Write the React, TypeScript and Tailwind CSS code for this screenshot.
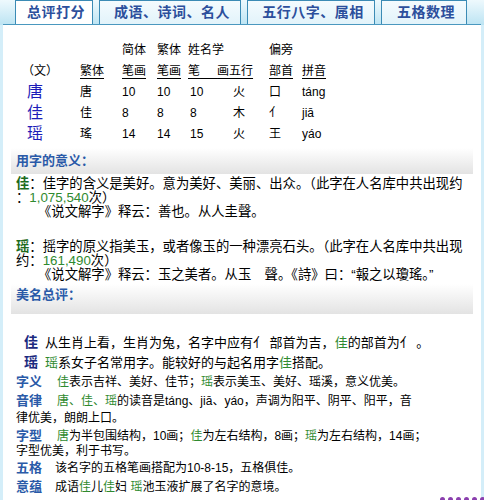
import React from "react";

const tabs = [
  { label: "总评打分", w: "w-[78px]", active: true },
  { label: "成语、诗词、名人", w: "w-[142px]", active: false },
  { label: "五行八字、属相", w: "w-[128px]", active: false },
  { label: "五格数理", w: "w-[86px]", active: false },
];

const rows = [
  { ch: "唐", fan: "唐", a: "10", b: "10", c: "10", wx: "火", bs: "口", py: "táng" },
  { ch: "佳", fan: "佳", a: "8", b: "8", c: "8", wx: "木", bs: "亻", py: "jiā" },
  { ch: "瑶", fan: "瑤", a: "14", b: "14", c: "15", wx: "火", bs: "王", py: "yáo" },
];

function G({ children }: { children: React.ReactNode }) {
  return <span className="text-[#2f8a2f]">{children}</span>;
}

function Label({ children, w = "w-[41px]" }: { children: React.ReactNode; w?: string }) {
  return (
    <span className={`inline-block ${w} text-[13px] font-bold text-[#2a5aa8]`}>{children}</span>
  );
}

function SectionBar({ title, className }: { title: string; className: string }) {
  return (
    <div
      className={`mx-[8px] flex bg-gradient-to-b from-white to-[#e3e3e3] pl-[5px] text-[13px] font-bold leading-[14px] text-[#2a5aa8] ${className}`}
    >
      {title}
    </div>
  );
}

export default function App() {
  return (
    <div className="h-[500px] w-[484px] overflow-hidden bg-[#d4eef9] font-['Liberation_Sans','Noto_Sans_CJK_SC',sans-serif] text-black">
      {/* 顶部标签栏 */}
      <div className="bg-gradient-to-b from-[#eef9fd] to-[#bce4f3] px-[3px]">
        <div className="flex h-[25px] gap-[6px] border-b border-[#4a98bf] pl-[12px]">
          {tabs.map((t) => (
            <div
              key={t.label}
              className={`${t.w} flex h-[24px] items-center justify-center border border-b-0 border-[#3b8bb5] pl-[4px] text-[14px] font-bold tracking-[0.5px] text-[#2c4f9c] ${
                t.active ? "bg-white pl-0" : "bg-gradient-to-b from-[#f4fbfe] to-[#e2f3fa]"
              }`}
            >
              {t.label}
            </div>
          ))}
        </div>
      </div>

      <div className="mx-[3px] h-[475px] bg-white">
        {/* 笔画表 */}
        <div className="pt-[14px] pl-[24px] text-[12px]">
          <div className="flex h-[21px] items-center">
            <span className="w-[95px]" />
            <span className="w-[35px]">简体</span>
            <span className="w-[31px]">繁体</span>
            <span className="w-[81px]">姓名学</span>
            <span>偏旁</span>
          </div>
          <div className="flex h-[21px] items-center">
            <span className="-ml-[5px] w-[58px]">（文）</span>
            <span className="w-[42px]"><span className="underline underline-offset-[3px]">繁体</span></span>
            <span className="w-[35px]"><span className="underline underline-offset-[3px]">笔画</span></span>
            <span className="w-[31px]"><span className="underline underline-offset-[3px]">笔画</span></span>
            <span className="w-[81px]">
              <span className="underline underline-offset-[3px]">
                笔<span className="tracking-[5px]">　</span>画五行
              </span>
            </span>
            <span className="w-[33px]"><span className="underline underline-offset-[3px]">部首</span></span>
            <span><span className="underline underline-offset-[3px]">拼音</span></span>
          </div>
          {rows.map((r) => (
            <div key={r.ch} className="flex h-[21px] items-center">
              <span className="w-[53px] text-[16px] text-[#1c1cb8]">{r.ch}</span>
              <span className="w-[42px]">{r.fan}</span>
              <span className="w-[35px]">{r.a}</span>
              <span className="w-[31px]">{r.b}</span>
              <span className="w-[45px] pl-[2px]">{r.c}</span>
              <span className="w-[36px]">{r.wx}</span>
              <span className="w-[33px]">{r.bs}</span>
              <span>{r.py}</span>
            </div>
          ))}
        </div>

        <SectionBar title="用字的意义：" className="mt-[4px] h-[26px] items-center" />

        <div className="mt-[3px] pl-[13px] text-[13.33px] whitespace-nowrap">
          <div className="h-[14px] leading-[14px]">
            <b className="text-[#1d6b1d]">佳</b>：佳字的含义是美好。意为美好、美丽、出众。（此字在人名库中共出现约
          </div>
          <div className="h-[14px] leading-[14px]">
            ：<G>1,075,540</G>次）
          </div>
          <div className="h-[14px] pl-[22px] leading-[14px]">《说文解字》释云：善也。从人圭聲。</div>
        </div>

        <div className="mt-[21px] pl-[13px] text-[13.33px] whitespace-nowrap">
          <div className="h-[14px] leading-[14px]">
            <b className="text-[#1d6b1d]">瑶</b>：摇字的原义指美玉，或者像玉的一种漂亮石头。（此字在人名库中共出现
          </div>
          <div className="h-[14px] leading-[14px]">
            约：<G>161,490</G>次）
          </div>
          <div className="h-[14px] pl-[22px] leading-[14px]">
            《说文解字》释云：玉之美者。从玉　聲。《詩》曰：“報之以瓊瑤。”
          </div>
        </div>

        <SectionBar title="美名总评：" className="mt-[2px] h-[30px] items-start pt-[4px]" />

        <div className="mt-[18px] pl-[21px] text-[13px] whitespace-nowrap">
          <div className="h-[20px] leading-[20px]">
            <span className="inline-block w-[21px] text-[14px] font-bold text-[#1b2a80]">佳</span>
            从生肖上看，生肖为兔，名字中应有亻 部首为吉，<G>佳</G>的部首为亻 。
          </div>
          <div className="h-[20px] leading-[20px]">
            <span className="inline-block w-[21px] text-[14px] font-bold text-[#1b2a80]">瑶</span>
            <G>瑶</G>系女子名常用字。能较好的与起名用字<G>佳</G>搭配。
          </div>
        </div>

        <div className="pl-[13px] text-[12px] whitespace-nowrap">
          <div className="h-[20px] leading-[20px]">
            <Label>字义</Label>
            <G>佳</G>表示吉祥、美好、佳节；<G>瑶</G>表示美玉、美好、瑶溪，意义优美。
          </div>
          <div className="h-[18px] leading-[18px]">
            <Label>音律</Label>
            <G>唐、佳、瑶</G>的读音是táng、jiā、yáo，声调为阳平、阴平、阳平，音
          </div>
          <div className="h-[17px] leading-[17px]">律优美，朗朗上口。</div>
          <div className="h-[17px] leading-[17px]">
            <Label>字型</Label>
            <G>唐</G>为半包围结构，10画；<G>佳</G>为左右结构，8画；<G>瑶</G>为左右结构，14画；
          </div>
          <div className="h-[15px] leading-[15px]">字型优美，利于书写。</div>
          <div className="h-[18px] leading-[18px]">
            <Label w="w-[39px]">五格</Label>
            该名字的五格笔画搭配为10-8-15，五格俱佳。
          </div>
          <div className="h-[19px] leading-[19px]">
            <Label w="w-[39px]">意蕴</Label>
            成语<G>佳</G>儿<G>佳</G>妇 <G>瑶</G>池玉液扩展了名字的意境。
          </div>
        </div>

        <div className="-mr-[4px] mt-[1px] flex justify-end gap-[3px]">
          {[0, 1, 2, 3, 4, 5].map((i) => (
            <span key={i} className="h-[5px] w-[5px] rounded-full bg-[#8b3fae]" />
          ))}
        </div>
      </div>
    </div>
  );
}
